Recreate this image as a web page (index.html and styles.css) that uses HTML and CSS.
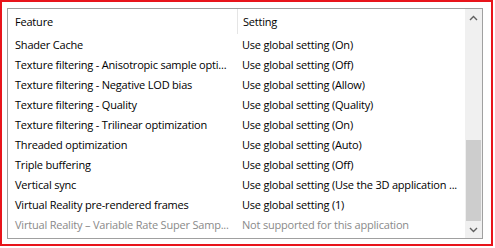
FILE: index.html
```html
<!DOCTYPE html>
<html>
<head>
  <title>Program Settings</title>
  <link rel="stylesheet" href="styles.css">
</head>
<body>
  <div class="frame">
    <div class="list">
      <div class="table">
        <div class="row header">
          <div class="cell feature">Feature</div>
          <div class="cell setting">Setting</div>
        </div>
        <div class="row">
          <div class="cell feature">Shader Cache</div>
          <div class="cell setting">Use global setting (On)</div>
        </div>
        <div class="row">
          <div class="cell feature">Texture filtering - Anisotropic sample opti...</div>
          <div class="cell setting">Use global setting (Off)</div>
        </div>
        <div class="row">
          <div class="cell feature">Texture filtering - Negative LOD bias</div>
          <div class="cell setting">Use global setting (Allow)</div>
        </div>
        <div class="row">
          <div class="cell feature">Texture filtering - Quality</div>
          <div class="cell setting">Use global setting (Quality)</div>
        </div>
        <div class="row">
          <div class="cell feature">Texture filtering - Trilinear optimization</div>
          <div class="cell setting">Use global setting (On)</div>
        </div>
        <div class="row">
          <div class="cell feature">Threaded optimization</div>
          <div class="cell setting">Use global setting (Auto)</div>
        </div>
        <div class="row">
          <div class="cell feature">Triple buffering</div>
          <div class="cell setting">Use global setting (Off)</div>
        </div>
        <div class="row">
          <div class="cell feature">Vertical sync</div>
          <div class="cell setting">Use global setting (Use the 3D application ...</div>
        </div>
        <div class="row">
          <div class="cell feature">Virtual Reality pre-rendered frames</div>
          <div class="cell setting">Use global setting (1)</div>
        </div>
        <div class="row disabled">
          <div class="cell feature">Virtual Reality – Variable Rate Super Samp...</div>
          <div class="cell setting">Not supported for this application</div>
        </div>
      </div>

      <div class="scrollbar">
        <div class="arrow">
          <svg width="9" height="6" viewBox="0 0 9 6"><polyline points="1,5 4.5,1.5 8,5" fill="none" stroke="#606060" stroke-width="1.4"/></svg>
        </div>
        <div class="track">
          <div class="thumb"></div>
        </div>
        <div class="arrow">
          <svg width="9" height="6" viewBox="0 0 9 6"><polyline points="1,1 4.5,4.5 8,1" fill="none" stroke="#606060" stroke-width="1.4"/></svg>
        </div>
      </div>
    </div>
  </div>
</body>
</html>
```

FILE: styles.css
```css
body {
  margin: 0;
  background: white;
  font-family: "Open Sans", "Noto Sans", sans-serif;
  font-size: 11px;
  letter-spacing: -0.2px;
  color: #000;
}
.frame {
  width: 493px;
  height: 246px;
  box-sizing: border-box;
  border: 2px solid #e8141b;
  padding: 6px 0 0 5px;
}
.list {
  width: 476px;
  height: 231px;
  box-sizing: border-box;
  border: 1px solid #a0a0a0;
  display: flex;
}
.table {
  flex: 1;
  overflow: hidden;
}
.row {
  display: grid;
  grid-template-columns: 229px 1fr;
  height: 20px;
  align-items: center;
}
.row.header {
  height: 25px;
}
.cell {
  white-space: nowrap;
  overflow: hidden;
}
.feature {
  padding-left: 7px;
}
.setting {
  padding-left: 5px;
}
.header .setting {
  border-left: 1px solid #e5e5e5;
  height: 100%;
  display: flex;
  align-items: center;
}
.disabled {
  color: #8a8a8a;
}
.scrollbar {
  width: 17px;
  background: #f0f0f0;
  display: flex;
  flex-direction: column;
}
.arrow {
  height: 17px;
  display: flex;
  align-items: center;
  justify-content: center;
}
.track {
  flex: 1;
  display: flex;
  flex-direction: column;
  padding: 0 1px;
}
.thumb {
  margin-top: 114px;
  height: 81px;
  background: #cdcdcd;
}
```
